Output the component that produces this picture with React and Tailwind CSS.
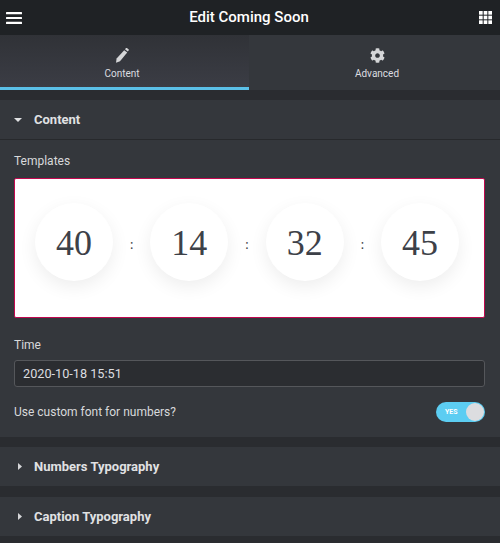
import React from "react";
import { FaCog } from "react-icons/fa";

function Circle({ children }) {
  return (
    <div className="w-[78px] h-[78px] rounded-full bg-white shadow-[0_6px_18px_rgba(0,0,0,0.07)] flex items-center justify-center pt-[3px] text-[36px] leading-none text-[#3d4148] font-['Liberation_Serif',serif]">
      {children}
    </div>
  );
}

function Colon() {
  return <div className="text-[14px] leading-none text-[#3d4148] pt-[6px] font-['Liberation_Serif',serif]">:</div>;
}

function Section({ title, open }) {
  return (
    <div className="h-[39px] bg-[#34373c] flex items-center text-[#e0e1e3]">
      <div className="w-[34px] flex shrink-0">
        {open ? (
          <svg width="8" height="4" viewBox="0 0 8 4" className="ml-[14px]"><path d="M0 0h8L4 4z" fill="#e0e1e3" /></svg>
        ) : (
          <svg width="4" height="7" viewBox="0 0 4 7" className="ml-[18px]"><path d="M0 0l4 3.5L0 7z" fill="#d5d6d8" /></svg>
        )}
      </div>
      <span className="text-[13px] font-bold leading-none">{title}</span>
    </div>
  );
}

export default function App() {
  return (
    <div className="w-[500px] h-[543px] overflow-hidden bg-[#2a2c30] font-['Roboto',sans-serif]">
      <header className="h-[35px] bg-[#1f2225] flex items-center justify-between pl-[6px] pr-[8px] text-white">
        <svg width="16" height="12" viewBox="0 0 16 12" fill="#fff">
          <rect y="0" width="16" height="2.2" rx="0.5" />
          <rect y="4.9" width="16" height="2.2" rx="0.5" />
          <rect y="9.8" width="16" height="2.2" rx="0.5" />
        </svg>
        <h1 className="text-[15px] font-medium leading-none -ml-[3px]">Edit Coming Soon</h1>
        <svg width="13" height="13" viewBox="0 0 13 13" fill="#fff">
          {[0, 4.67, 9.33].flatMap((x) => [0, 4.67, 9.33].map((y) => <rect key={`${x}-${y}`} x={x} y={y} width="3.67" height="3.67" />))}
        </svg>
      </header>

      <nav className="h-[55px] flex">
        <div className="w-[249px] bg-gradient-to-b from-[#303237] to-[#3b3d45] border-b-[3px] border-[#5bc0e8] flex flex-col items-center pt-[13px] pr-[5px] text-[#dcdde0]">
          <svg width="14" height="15" viewBox="0 0 14 15" fill="#d5d6d8">
            <path d="M9.2 2.2l3 2.4-7.2 8.6L1 14.8l.6-4.2z" />
            <path d="M10 1.2L10.8.3c.4-.4 1-.4 1.4-.1l1.3 1c.4.4.5 1 .1 1.4l-.8 1z" />
          </svg>
          <span className="text-[10px] leading-none mt-[6px]">Content</span>
        </div>
        <div className="flex-1 bg-[#34373c] flex flex-col items-center pt-[13px] pl-[5px] text-[#dcdde0]">
          <FaCog size={15} color="#d5d6d8" />
          <span className="text-[10px] leading-none mt-[6px]">Advanced</span>
        </div>
      </nav>

      <div className="mt-[10px]">
        <Section title="Content" open />
        <div className="h-[298px] bg-[#34373c] border-t border-[#27292c] px-[14px] pt-[15px]">
          <div className="text-[12px] leading-none text-[#d8d9db]">Templates</div>
          <div className="mt-[11px] h-[140px] w-[471px] rounded-[2px] border border-[#c1084f] bg-white flex items-center justify-between pl-[20px] pr-[25px] pb-[13px]">
            <Circle>40</Circle>
            <Colon />
            <Circle>14</Circle>
            <Colon />
            <Circle>32</Circle>
            <Colon />
            <Circle>45</Circle>
          </div>
          <div className="mt-[21px] text-[12px] leading-none text-[#d8d9db]">Time</div>
          <div className="mt-[9px] h-[27px] w-[471px] rounded-[3px] border border-[#55575b] bg-[#2b2d31] flex items-center pl-[8px] text-[12.7px] text-[#dcdde0]">
            2020-10-18 15:51
          </div>
          <div className="mt-[15px] flex items-center justify-between w-[471px]">
            <span className="text-[12px] leading-none text-[#d8d9db]">Use custom font for numbers?</span>
            <div className="relative w-[49px] h-[20px] rounded-full bg-[#5ccdf2] flex items-center">
              <span className="ml-[9px] text-[7px] font-bold leading-none text-white">YES</span>
              <div className="absolute right-[1px] top-[1px] w-[18px] h-[18px] rounded-full bg-[#dcdde0]" />
            </div>
          </div>
        </div>
      </div>

      <div className="mt-[10px]">
        <Section title="Numbers Typography" />
      </div>
      <div className="mt-[11px]">
        <Section title="Caption Typography" />
      </div>
    </div>
  );
}
